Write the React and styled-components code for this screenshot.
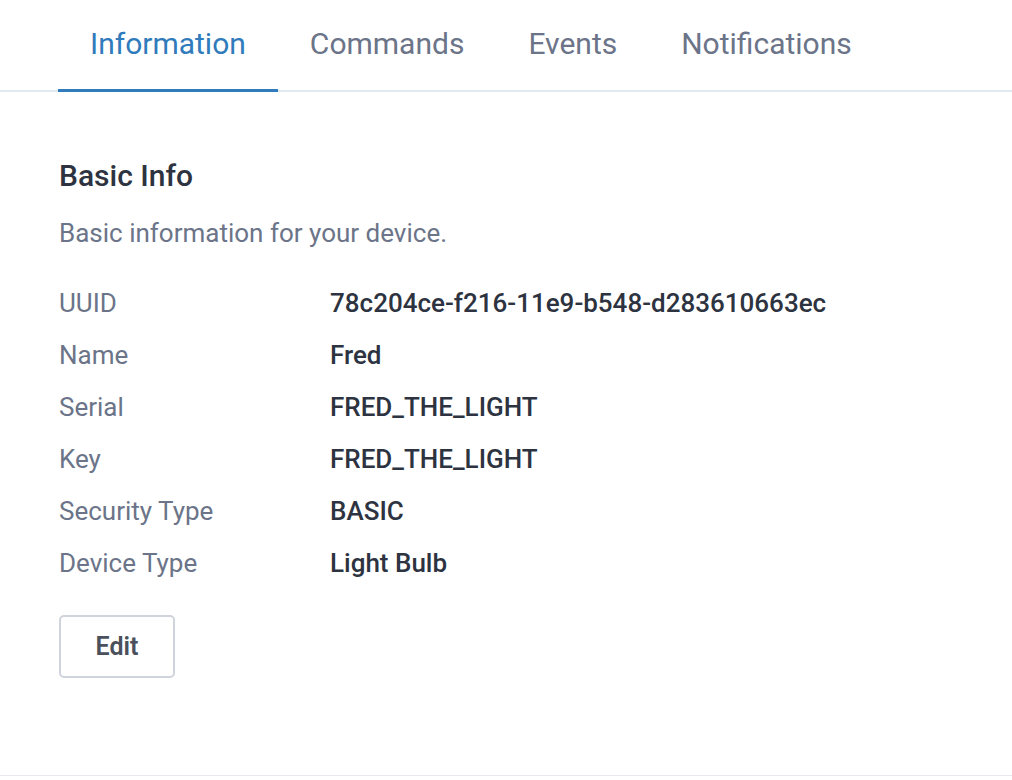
import React from "react";
import styled, { createGlobalStyle } from "styled-components";

const Global = createGlobalStyle`
  html, body { margin: 0; padding: 0; background: #fff; }
  body { font-family: Roboto, "Noto Sans", sans-serif; -webkit-font-smoothing: antialiased; }
  * { box-sizing: border-box; }
`;

const Page = styled.div`
  width: 1012px;
  height: 776px;
  border-bottom: 1px solid #e6e9ee;
  background: #fff;
`;

const TabBar = styled.nav`
  display: flex;
  height: 92px;
  padding-left: 58px;
  border-bottom: 2px solid #e2e8f0;
`;

const Tab = styled.div`
  display: flex;
  align-items: center;
  padding: 0 32px 2px;
  font-size: 30px;
  font-weight: 400;
  color: ${(p) => (p.$active ? "#2f7bbb" : "#6b7488")};
  margin-bottom: -2px;
  border-bottom: 3px solid ${(p) => (p.$active ? "#2f7bbb" : "transparent")};
`;

const Section = styled.section`
  padding: 66px 0 0 59px;
`;

const Title = styled.h2`
  margin: 0;
  font-size: 30px;
  line-height: 36px;
  font-weight: 500;
  color: #2d3340;
`;

const Desc = styled.p`
  margin: 21px 0 26px;
  font-size: 26px;
  line-height: 36px;
  color: #6b7488;
`;

const Grid = styled.dl`
  display: grid;
  grid-template-columns: 271px 1fr;
  grid-auto-rows: 52px;
  margin: 0;
`;

const Label = styled.dt`
  display: flex;
  align-items: center;
  font-size: 26px;
  color: #6b7488;
`;

const Value = styled.dd`
  display: flex;
  align-items: center;
  margin: 0;
  font-size: 26px;
  font-weight: 500;
  color: #2d3340;
`;

const Button = styled.button`
  margin-top: 26px;
  width: 116px;
  height: 63px;
  border: 2px solid #cfd4dc;
  border-radius: 5px;
  background: #fff;
  font-family: Roboto, sans-serif;
  font-size: 25px;
  font-weight: 600;
  color: #4a505c;
  padding: 0;
`;

const rows = [
  ["UUID", "78c204ce-f216-11e9-b548-d283610663ec"],
  ["Name", "Fred"],
  ["Serial", "FRED_THE_LIGHT"],
  ["Key", "FRED_THE_LIGHT"],
  ["Security Type", "BASIC"],
  ["Device Type", "Light Bulb"],
];

export default function App() {
  return (
    <Page>
      <Global />
      <TabBar>
        <Tab $active>Information</Tab>
        <Tab>Commands</Tab>
        <Tab>Events</Tab>
        <Tab>Notifications</Tab>
      </TabBar>
      <Section>
        <Title>Basic Info</Title>
        <Desc>Basic information for your device.</Desc>
        <Grid>
          {rows.map(([k, v]) => (
            <React.Fragment key={k}>
              <Label>{k}</Label>
              <Value>{v}</Value>
            </React.Fragment>
          ))}
        </Grid>
        <Button>Edit</Button>
      </Section>
    </Page>
  );
}
